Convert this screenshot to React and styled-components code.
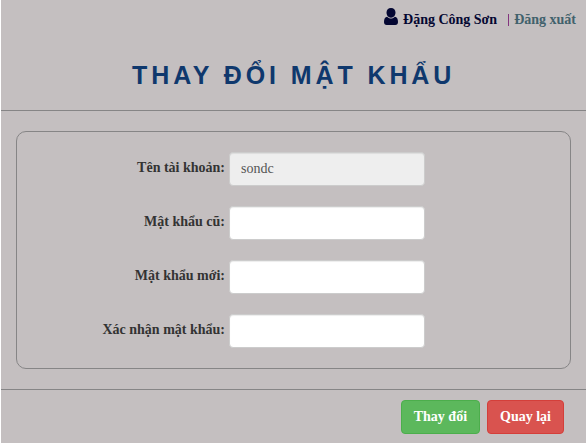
import React from "react";
import styled, { createGlobalStyle } from "styled-components";

const GlobalStyle = createGlobalStyle`
  * { box-sizing: border-box; }
  html { background: #fff; overflow: hidden; }
  body { margin: 0; }
`;

const Page = styled.div`
  display: flex;
  flex-direction: column;
  width: 585px;
  height: 443px;
  margin: 0 1px;
  background: #c4bfc0;
  font-family: "Liberation Serif", "Times New Roman", serif;
  font-size: 14px;
  line-height: 20px;
  color: #333;
`;

const Header = styled.header`
  height: 111px;
  border-bottom: 1px solid #868586;
`;

const UserBar = styled.div`
  display: flex;
  height: 40px;
  padding: 8px 10px 0 0;
  justify-content: flex-end;
  font-weight: bold;
  white-space: nowrap;
`;

const UserIcon = styled.svg`
  width: 14px;
  height: 17px;
  margin-right: 5px;
  fill: #040732;
`;

const UserName = styled.span`
  margin: 2px 11px 0 0;
  color: #040732;
`;

const Divider = styled.span`
  width: 1px;
  height: 12px;
  margin: 6px 5px 0 0;
  background: #83347e;
`;

const LogoutLink = styled.a`
  margin-top: 2px;
  color: #41616c;
  text-decoration: none;
`;

const Title = styled.h1`
  margin: 0;
  padding: 20px 0 0 131px;
  font: bold 25px/30px "Liberation Sans", Arial, sans-serif;
  letter-spacing: 3.9px;
  color: #0f386d;
  white-space: nowrap;
`;

const Form = styled.form`
  display: flex;
  flex: 1;
  flex-direction: column;
`;

const Fields = styled.div`
  display: flex;
  flex-direction: column;
  gap: 20px;
  height: 238px;
  margin: 20px 15px;
  padding: 20px 0;
  border: 1px solid #868586;
  border-radius: 10px;
`;

const Field = styled.div`
  display: grid;
  grid-template-columns: 208px 196px;
  column-gap: 4px;
  height: 34px;
`;

const Label = styled.label`
  padding-top: 6px;
  text-align: right;
  font-weight: bold;
  white-space: nowrap;
`;

const Input = styled.input`
  width: 196px;
  height: 34px;
  padding: 6px 11px;
  border: 1px solid #ccc;
  border-radius: 4px;
  outline: none;
  background: ${({ disabled }) => (disabled ? "#eee" : "#fff")};
  box-shadow: inset 0 1px 1px rgba(0, 0, 0, 0.075);
  color: #555;
  font: 14px/20px "Liberation Serif", "Times New Roman", serif;
`;

const Footer = styled.footer`
  display: flex;
  flex: 1;
  align-items: flex-start;
  justify-content: flex-end;
  gap: 7px;
  padding: 10px 22px 0 0;
  border-top: 1px solid #868586;
`;

const tones = {
  success: { fill: "#5cb85c", edge: "#4cae4c" },
  danger: { fill: "#d9534f", edge: "#d43f3a" },
};

const Button = styled.button`
  height: 34px;
  padding: 0 12px;
  border: 1px solid ${({ $tone }) => tones[$tone].edge};
  border-radius: 4px;
  background: ${({ $tone }) => tones[$tone].fill};
  color: #fff;
  font: bold 14px/20px "Liberation Serif", "Times New Roman", serif;
  white-space: nowrap;
`;

const fields = [
  { id: "account", label: "Tên tài khoản:", value: "sondc", disabled: true },
  { id: "old", label: "Mật khẩu cũ:", type: "password" },
  { id: "new", label: "Mật khẩu mới:", type: "password" },
  { id: "confirm", label: "Xác nhận mật khẩu:", type: "password" },
];

export default function App() {
  return (
    <>
      <GlobalStyle />
      <Page>
        <Header>
          <UserBar>
            <UserIcon viewBox="0 0 14 17" aria-hidden="true">
              <path d="M7 0C4.2 0 2.5 1.8 2.5 4.6C2.5 7.4 4.4 9.8 7 9.8S11.5 7.4 11.5 4.6C11.5 1.8 9.8 0 7 0ZM3.2 8.7C1 9 0 10.8 0 14C0 16 1 17 2.7 17H11.3C13 17 14 16 14 14C14 10.8 13 9 10.8 8.7C9.8 9.9 8.5 10.5 7 10.5S4.2 9.9 3.2 8.7Z" />
            </UserIcon>
            <UserName>Đặng Công Sơn</UserName>
            <Divider />
            <LogoutLink>Đăng xuất</LogoutLink>
          </UserBar>
          <Title>THAY ĐỔI MẬT KHẨU</Title>
        </Header>
        <Form>
          <Fields>
            {fields.map(({ id, label, value, type = "text", disabled }) => (
              <Field key={id}>
                <Label htmlFor={id}>{label}</Label>
                <Input id={id} type={type} defaultValue={value} disabled={disabled} />
              </Field>
            ))}
          </Fields>
          <Footer>
            <Button type="button" $tone="success">Thay đổi</Button>
            <Button type="button" $tone="danger">Quay lại</Button>
          </Footer>
        </Form>
      </Page>
    </>
  );
}
